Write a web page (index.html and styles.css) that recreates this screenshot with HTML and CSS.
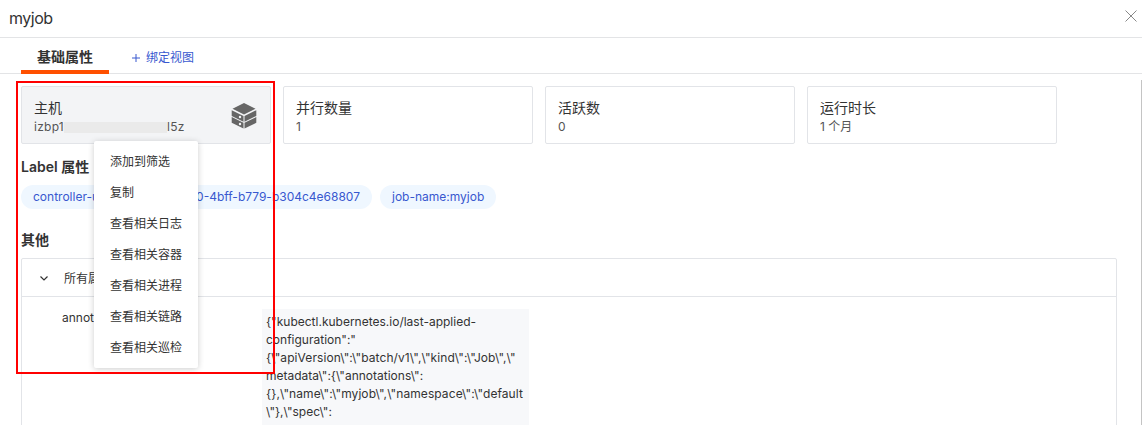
FILE: index.html
```html
<!DOCTYPE html>
<html lang="zh-CN">
<head>
<meta charset="utf-8">
<title>myjob</title>
<link rel="stylesheet" href="styles.css">
</head>
<body>
<div class="drawer">
  <header class="head">
    <span class="title">myjob</span>
    <svg class="close" width="12" height="12" viewBox="0 0 12 12"><path d="M.5.5l11 11M11.5.5l-11 11"/></svg>
  </header>
  <nav class="tabs">
    <span class="tab">基础属性</span>
    <span class="bind"><svg width="8" height="8" viewBox="0 0 8 8"><path d="M4 0v8M0 4h8"/></svg><span>绑定视图</span></span>
  </nav>
  <main class="content">
    <section class="cards">
      <div class="card active">
        <div>
          <div class="name">主机</div>
          <div class="value host"><span>izbp1</span><i class="mask"></i><span>l5z</span></div>
        </div>
        <svg class="server" width="26" height="26" viewBox="0 0 26 26">
          <path d="M13 0L24.500 5.800 13 11.600 1.500 5.800z"/>
          <path d="M.7 7.200L12.500 13V18.700L.7 12.900zM25.300 7.200L13.500 13V18.700L25.300 12.900z"/>
          <path d="M.7 14L12.500 19.800V25.600L.7 19.800zM25.300 14L13.500 19.800V25.600L25.300 19.800z"/>
          <circle cx="9" cy="14" r="1.200"/><circle cx="9" cy="21" r="1.200"/>
        </svg>
      </div>
      <div class="card"><div><div class="name">并行数量</div><div class="value">1</div></div></div>
      <div class="card"><div><div class="name">活跃数</div><div class="value">0</div></div></div>
      <div class="card"><div><div class="name">运行时长</div><div class="value">1 个月</div></div></div>
    </section>
    <h2 class="labels-title">Label 属性</h2>
    <div class="pills">
      <span class="pill wide"><span>controller-u</span><span>0-4bff-b779-b304c4e68807</span></span>
      <span class="pill">job-name:myjob</span>
    </div>
    <h2 class="other-title">其他</h2>
    <section class="panel">
      <div class="panel-head">
        <svg width="8" height="5" viewBox="0 0 8 5"><path d="M.5.500L4 4 7.500.500"/></svg>
        <span>所有属性</span>
      </div>
      <div class="row">
        <span class="key">annotations</span>
        <div class="code">{"kubectl.kubernetes.io/last-applied-<br>configuration":"<br><span class="loose">{\"apiVersion\":\"batch/v1\",\"kind\":\"Job\",\"</span><br>metadata\":{\"annotations\":<br><span class="loose">{},\"name\":\"myjob\",\"namespace\":\"default</span><br>\"},\"spec\":<br>{\"template\":{\"metadata\":{\"name\":</div>
      </div>
    </section>
  </main>
  <i class="scrollbar"></i>
  <ul class="menu">
    <li>添加到筛选</li><li>复制</li><li>查看相关日志</li><li>查看相关容器</li><li>查看相关进程</li><li>查看相关链路</li><li>查看相关巡检</li>
  </ul>
  <i class="highlight"></i>
</div>
</body>
</html>
```
FILE: styles.css
```css
* { box-sizing: border-box; }
body { margin: 0; background: #fff; color: #333; font: 12px/18px Inter, "Noto Sans CJK SC", sans-serif; }
.drawer { position: relative; width: 1142px; height: 425px; overflow: hidden; }
.head { height: 38px; padding: 0 5px 0 9px; display: flex; justify-content: space-between; border-bottom: 1px solid #e3e4e6; }
.title { font-size: 16px; line-height: 36px; letter-spacing: -.5px; }
.close { margin-top: 10px; fill: none; stroke: #888; stroke-width: 1; }
.tabs { height: 36px; padding-left: 21px; display: flex; border-bottom: 1px solid #e3e4e6; }
.tab { width: 88px; height: 36px; line-height: 38px; text-align: center; font-size: 14px; font-weight: 600; border-bottom: 4px solid #ff5000; }
.bind { margin-left: 23px; padding-top: 4px; display: flex; align-items: center; gap: 6px; color: #3858cf; }
.bind svg { stroke: #3858cf; fill: none; }
.content { padding: 12px 25px 0 21px; }
.cards { display: flex; gap: 12px; }
.card { width: 250px; height: 58px; padding: 11px 13px 0 12px; display: flex; justify-content: space-between; border: 1px solid #e2e4e8; border-radius: 2px; }
.active { background: #f3f4f6; }
.name { font-size: 14px; line-height: 20px; }
.value { color: #555; line-height: 18px; }
.host { display: flex; align-items: center; letter-spacing: .25px; }
.mask { width: 103px; height: 11px; background: #eaeaea; }
.server { margin-top: 5px; fill: #666; }
.server circle { fill: #f3f4f6; }
h2 { margin: 0; font-size: 14px; line-height: 20px; font-weight: 600; }
.labels-title { margin-top: 13px; }
.pills { margin-top: 8px; display: flex; gap: 8px; }
.pill { height: 24px; line-height: 24px; padding: 0 12px; border-radius: 12px; background: #eff7ff; color: #3858cf; white-space: nowrap; }
.wide { width: 351px; display: flex; justify-content: space-between; }
.other-title { margin-top: 21px; }
.panel { margin-top: 8px; height: 220px; border: 1px solid #e2e4e8; border-radius: 2px; }
.panel-head { height: 38px; padding: 2px 0 0 18px; display: flex; align-items: center; gap: 16px; border-bottom: 1px solid #e2e4e8; }
.panel-head svg { fill: none; stroke: #333; stroke-width: 1.2; }
.row { padding: 12px 0 0 40px; display: flex; }
.key { width: 200px; }
.code { width: 267px; padding: 4px; background: #f7f8fa; white-space: nowrap; }
.loose { letter-spacing: .08px; }
.scrollbar { position: absolute; right: 0; top: 80px; width: 1px; height: 345px; background: #c4c4c4; }
.menu { position: absolute; left: 94px; top: 141px; width: 104px; height: 227px; margin: 0; padding: 5px 0; list-style: none; background: #fff; border-radius: 2px; box-shadow: 0 1px 6px rgba(0,0,0,.2); }
.menu li { height: 31px; line-height: 31px; padding-left: 16px; }
.highlight { position: absolute; left: 16px; top: 81px; width: 259px; height: 293px; border: 2px solid #f00; }
```
